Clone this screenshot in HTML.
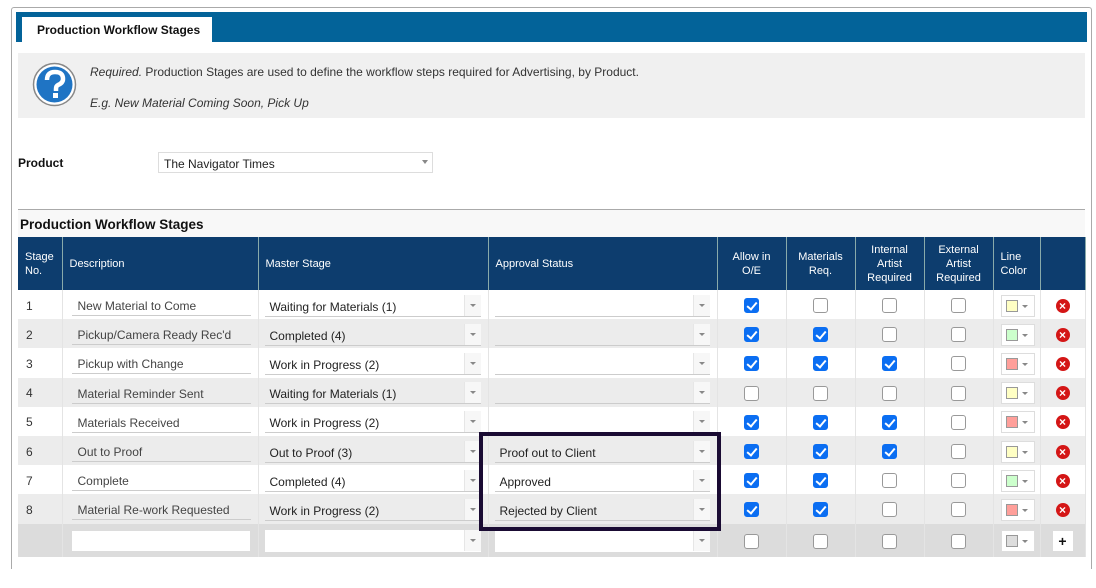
<!DOCTYPE html>
<html><head><meta charset="utf-8"><style>
*{box-sizing:border-box;margin:0;padding:0}
body{width:1096px;height:588px;background:#fff;font-family:"Liberation Sans",sans-serif;font-size:12px;color:#333;position:relative;overflow:hidden}
.abs{position:absolute}
.outer{left:11px;top:7px;width:1081px;height:562px;border:1px solid #aaa;border-bottom:none;border-radius:3px 3px 0 0}
.bar{left:16px;top:12px;width:1071px;height:30px;background:#036399}
.tab{left:22px;top:17px;width:190px;height:25px;background:#fff;font-weight:bold;font-size:12px;color:#111;padding:6px 0 0 15px}
.info{left:18px;top:53px;width:1067px;height:65px;background:#f0f0f0}
table{position:absolute;left:18px;top:237px;border-collapse:collapse;width:1067px;table-layout:fixed}
th{background:#0d3d6e;color:#fff;font-weight:normal;font-size:11px;height:53px;border-right:1px solid #8aa;line-height:14px;text-align:left;padding-left:7px}
th.c{text-align:center;padding:0}
td{height:29.2px;border-right:1px solid #e4e4e4;padding:0;position:relative;font-size:12px;padding-top:2px}
tr.alt td{background:#ececec}
tr.new td{background:#dcdcdc;height:33px}
.num{padding-left:8px}
.txt{margin:0 7px 0 9px;border-bottom:1px solid #ccc;height:21px;padding:4px 0 0 6px;color:#444}
.sel{margin:0 7px 0 6px;border-bottom:1px solid #ccc;height:22px;padding:5px 0 0 5px;color:#222;position:relative}
.sel:after{content:"";position:absolute;right:0;top:0;width:16px;height:21px;background:#f7f7f7;border-left:1px solid #e6e6e6}
.sel:before{content:"";position:absolute;right:5px;top:9px;border:3px solid transparent;border-top:3px solid #888;z-index:2}
.cb{width:15px;height:15px;border:1.5px solid #999;border-radius:3px;margin:0 auto;background:#fff;position:relative}
.cb.on{background:#0b6ef2;border-color:#0b6ef2}
.cb.on:after{content:"";position:absolute;left:4px;top:1px;width:4px;height:8px;border:solid #fff;border-width:0 2px 2px 0;transform:rotate(40deg)}
.col{width:34px;height:22px;border:1px solid #ddd;background:#fff;margin-left:7px;position:relative}
.col i{position:absolute;left:4px;top:4px;width:12px;height:12px;border:1px solid #999}
.col:after{content:"";position:absolute;right:6px;top:9px;border:3px solid transparent;border-top:3px solid #888}
.x{width:14px;height:14px;border-radius:50%;background:#d41616;margin:0 auto;color:#fff;font-size:12px;font-weight:bold;line-height:14px;text-align:center}
.inp{margin:0 8px 0 9px;height:20px;background:#fff}
</style></head><body>
<div class="abs outer"></div>
<div class="abs bar"></div>
<div class="abs tab">Production Workflow Stages</div>
<div class="abs info"></div>
<svg class="abs" style="left:32px;top:62px" width="45" height="45" viewBox="0 0 45 45"><circle cx="22.5" cy="22.5" r="21" fill="#fff" stroke="#888" stroke-width="1.5"/><circle cx="22.5" cy="22.5" r="18" fill="#1f74c4"/><path d="M15 18 q0-8 8-8 q8 0 8 7 q0 4-5 6 q-2 1-2 4v2" fill="none" stroke="#fff" stroke-width="4.5"/><rect x="21" y="31" width="5" height="5" fill="#fff"/></svg>
<div class="abs" style="left:90px;top:65px;font-size:12px;color:#333"><i>Required.</i> Production Stages are used to define the workflow steps required for Advertising, by Product.</div>
<div class="abs" style="left:90px;top:96px;font-size:12px;color:#333"><i>E.g. New Material Coming Soon, Pick Up</i></div>
<div class="abs" style="left:18px;top:156px;font-weight:bold;color:#111">Product</div>
<div class="abs" style="left:158px;top:152px;width:275px;height:21px;border:1px solid #ddd;padding:4px 0 0 5px;color:#222">The Navigator Times<span style="position:absolute;right:4px;top:7px;border:3px solid transparent;border-top:4px solid #888"></span></div>
<div class="abs" style="left:18px;top:209px;width:1067px;height:28px;background:#f8f8f8;border-top:1px solid #aaa;font-weight:bold;font-size:13.5px;color:#111;padding:7px 0 0 2px">Production Workflow Stages</div>
<table>
<colgroup><col style="width:44px"><col style="width:196px"><col style="width:230px"><col style="width:229px"><col style="width:69px"><col style="width:69px"><col style="width:69px"><col style="width:69px"><col style="width:47px"><col style="width:45px"></colgroup>
<tr><th>Stage<br>No.</th><th>Description</th><th>Master Stage</th><th>Approval Status</th><th class="c">Allow in<br>O/E</th><th class="c">Materials<br>Req.</th><th class="c">Internal<br>Artist<br>Required</th><th class="c">External<br>Artist<br>Required</th><th>Line<br>Color</th><th></th></tr>
<tr><td class="num">1</td><td><div class="txt">New Material to Come</div></td><td><div class="sel">Waiting for Materials (1)</div></td><td><div class="sel"></div></td><td><div class="cb on"></div></td><td><div class="cb"></div></td><td><div class="cb"></div></td><td><div class="cb"></div></td><td><div class="col"><i style="background:#ffffc4"></i></div></td><td><div class="x">×</div></td></tr>
<tr class="alt"><td class="num">2</td><td><div class="txt">Pickup/Camera Ready Rec'd</div></td><td><div class="sel">Completed (4)</div></td><td><div class="sel"></div></td><td><div class="cb on"></div></td><td><div class="cb on"></div></td><td><div class="cb"></div></td><td><div class="cb"></div></td><td><div class="col"><i style="background:#ccffcc"></i></div></td><td><div class="x">×</div></td></tr>
<tr><td class="num">3</td><td><div class="txt">Pickup with Change</div></td><td><div class="sel">Work in Progress (2)</div></td><td><div class="sel"></div></td><td><div class="cb on"></div></td><td><div class="cb on"></div></td><td><div class="cb on"></div></td><td><div class="cb"></div></td><td><div class="col"><i style="background:#ff9f9a"></i></div></td><td><div class="x">×</div></td></tr>
<tr class="alt"><td class="num">4</td><td><div class="txt">Material Reminder Sent</div></td><td><div class="sel">Waiting for Materials (1)</div></td><td><div class="sel"></div></td><td><div class="cb"></div></td><td><div class="cb"></div></td><td><div class="cb"></div></td><td><div class="cb"></div></td><td><div class="col"><i style="background:#ffffc4"></i></div></td><td><div class="x">×</div></td></tr>
<tr><td class="num">5</td><td><div class="txt">Materials Received</div></td><td><div class="sel">Work in Progress (2)</div></td><td><div class="sel"></div></td><td><div class="cb on"></div></td><td><div class="cb on"></div></td><td><div class="cb on"></div></td><td><div class="cb"></div></td><td><div class="col"><i style="background:#ff9f9a"></i></div></td><td><div class="x">×</div></td></tr>
<tr class="alt"><td class="num">6</td><td><div class="txt">Out to Proof</div></td><td><div class="sel">Out to Proof (3)</div></td><td><div class="sel">Proof out to Client</div></td><td><div class="cb on"></div></td><td><div class="cb on"></div></td><td><div class="cb on"></div></td><td><div class="cb"></div></td><td><div class="col"><i style="background:#ffffc4"></i></div></td><td><div class="x">×</div></td></tr>
<tr><td class="num">7</td><td><div class="txt">Complete</div></td><td><div class="sel">Completed (4)</div></td><td><div class="sel">Approved</div></td><td><div class="cb on"></div></td><td><div class="cb on"></div></td><td><div class="cb"></div></td><td><div class="cb"></div></td><td><div class="col"><i style="background:#ccffcc"></i></div></td><td><div class="x">×</div></td></tr>
<tr class="alt"><td class="num">8</td><td><div class="txt">Material Re-work Requested</div></td><td><div class="sel">Work in Progress (2)</div></td><td><div class="sel">Rejected by Client</div></td><td><div class="cb on"></div></td><td><div class="cb on"></div></td><td><div class="cb"></div></td><td><div class="cb"></div></td><td><div class="col"><i style="background:#ff9f9a"></i></div></td><td><div class="x">×</div></td></tr>
<tr class="new"><td></td><td><div class="inp"></div></td><td><div class="sel" style="background:#fff;border:none"></div></td><td><div class="sel" style="background:#fff;border:none"></div></td><td><div class="cb"></div></td><td><div class="cb"></div></td><td><div class="cb"></div></td><td><div class="cb"></div></td><td><div class="col"><i style="background:#ddd"></i></div></td><td><div style="width:20px;height:20px;background:#fff;margin:0 auto;text-align:center;font-weight:bold;font-size:14px;line-height:20px;color:#111">+</div></td></tr>
</table>
<div class="abs" style="left:479px;top:432px;width:242px;height:99px;border:4px solid #1a0b33"></div>
</body></html>
